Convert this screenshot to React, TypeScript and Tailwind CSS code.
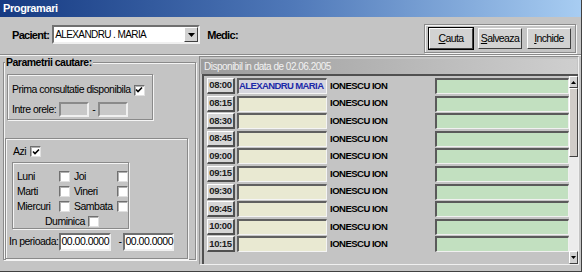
import React from "react";

const times = ["08:00", "08:15", "08:30", "08:45", "09:00", "09:15", "09:30", "09:45", "10:00", "10:15"];

const raised = "border-t-white border-l-white border-b-[#404040] border-r-[#404040] border";
const etched = "border border-[#8a8a8a] shadow-[1px_1px_0_#f4f4f4,inset_1px_1px_0_#f4f4f4]";
const field = "border-2 border-t-[#707070] border-l-[#707070] border-b-[#f0f0f0] border-r-[#f0f0f0]";

function Check({ checked = false }: { checked?: boolean }) {
  return (
    <span className="inline-flex w-[11px] h-[11px] bg-white items-center justify-center border border-t-[#707070] border-l-[#707070] border-b-[#e0e0e0] border-r-[#e0e0e0] shadow-[inset_1px_1px_0_#b0b0b0]">
      {checked && (
        <svg width="8" height="8" viewBox="0 0 8 8">
          <path d="M1 3.5 L3 5.5 L7 1.5" stroke="black" strokeWidth="1.6" fill="none" />
        </svg>
      )}
    </span>
  );
}

function Btn({ label, bold = false }: { label: string; bold?: boolean }) {
  return (
    <div className={`h-[21px] w-[44px] flex items-center justify-center bg-[#d2d2d2] ${bold ? "outline outline-1 outline-black" : ""} ${raised}`}>
      <span className="text-[10.5px] tracking-[-0.6px]">
        <span className="underline">{label[0]}</span>
        {label.slice(1)}
      </span>
    </div>
  );
}

function Row({ time, idx }: { time: string; idx: number }) {
  return (
    <div className="h-[17.6px] flex items-start pt-[1px]">
      <div className="ml-[3px] w-[28px] h-[16px] flex items-center justify-center bg-[#d6d6d6] text-[9.5px] tracking-[-0.4px] font-bold text-[#202020] border border-t-white border-l-white border-b-2 border-r-2 border-b-[#505050] border-r-[#505050]">
        {time}
      </div>
      <div
        className={`ml-[2px] w-[90px] h-[16px] flex items-center whitespace-nowrap overflow-hidden border-t-2 border-l-2 border-t-[#606060] border-l-[#606060] border-b border-r border-b-[#f4f4f4] border-r-[#f4f4f4] ${
          idx === 0 ? "bg-[#d6d6de] text-[#1c2aa8] font-bold text-[9.5px] tracking-[-0.6px]" : "bg-[#e9e9d2]"
        }`}
      >
        {idx === 0 ? "ALEXANDRU MARIA" : ""}
      </div>
      <div className="ml-[3px] w-[105px] h-[16px] flex items-center whitespace-nowrap text-[9.5px] tracking-[-0.5px] font-bold text-black">
        IONESCU ION
      </div>
      <div className="w-[134px] h-[16px] bg-[#c2e0c0] border-t-2 border-l-2 border-t-[#5a5a5a] border-l-[#5a5a5a] border-b border-r border-b-[#f0f0f0] border-r-[#f0f0f0]" />
    </div>
  );
}

export default function App() {
  return (
    <div className="w-[582px] h-[272px] bg-[#c4c4c4] flex flex-col overflow-hidden text-[10.5px] tracking-[-0.5px] text-black font-['Liberation_Sans',Arial,sans-serif] border-r border-b border-[#404040]">
      {/* title bar */}
      <div className="h-[17px] flex items-center pl-[3px] bg-gradient-to-r from-[#163a82] via-[#4f78b8] to-[#a8cdf2] text-white font-bold text-[11px] tracking-[-0.4px]">
        Programari
      </div>

      {/* top row */}
      <div className="h-[38px] flex items-start border-b border-b-[#8a8a8a] shadow-[0_1px_0_#f4f4f4]">
        <span className="mt-[10px] ml-[12px] font-bold text-[11px] tracking-[-0.7px]">Pacient:</span>
        <div className={`mt-[8px] ml-[3px] w-[148px] h-[19px] bg-white flex items-center ${field}`}>
          <span className="flex-1 pl-[1px] text-[10px] tracking-[-0.6px] whitespace-nowrap">ALEXANDRU . MARIA</span>
          <div className={`w-[14px] h-[15px] bg-[#d2d2d2] flex items-center justify-center ${raised}`}>
            <svg width="7" height="4" viewBox="0 0 7 4">
              <path d="M0 0 H7 L3.5 4 Z" fill="black" />
            </svg>
          </div>
        </div>
        <span className="mt-[10px] ml-[7px] font-bold text-[11px] tracking-[-0.7px]">Medic:</span>
        <div className={`ml-auto mr-[5px] mt-[7px] flex gap-[5px] px-[4px] py-[3px] ${etched}`}>
          <Btn label="Cauta" bold />
          <Btn label="Salveaza" />
          <Btn label="Inchide" />
        </div>
      </div>

      {/* main */}
      <div className="flex flex-1">
        {/* left */}
        <div className="w-[199px] pl-[3px] pt-[1px]">
          <fieldset className={`w-[193px] h-[204px] ${etched}`}>
            <legend className="ml-[1px] px-[1px] font-bold text-[10.5px] tracking-[-0.5px] leading-[12px] bg-[#c4c4c4]">
              Parametrii cautare:
            </legend>
            <div className={`ml-[3px] mt-[6px] w-[146px] h-[46px] pl-[4px] pt-[8px] ${etched}`}>
              <div className="flex items-center gap-[3px] h-[14px] whitespace-nowrap">
                <span>Prima consultatie disponibila</span>
                <Check checked />
              </div>
              <div className="flex items-center mt-[5px] h-[15px] whitespace-nowrap">
                <span>Intre orele:</span>
                <div className="ml-[3px] w-[30px] h-[15px] bg-[#c8c8c8] border-2 border-t-[#8a8a8a] border-l-[#8a8a8a] border-b-[#f0f0f0] border-r-[#f0f0f0]" />
                <span className="mx-[3px]">-</span>
                <div className="w-[30px] h-[15px] bg-[#c8c8c8] border-2 border-t-[#8a8a8a] border-l-[#8a8a8a] border-b-[#f0f0f0] border-r-[#f0f0f0]" />
              </div>
            </div>
            <div className={`mt-[18px] ml-[1px] w-[183px] h-[121px] pt-[6px] ${etched}`}>
              <div className="flex items-center gap-[4px] pl-[7px] h-[13px]">
                <span>Azi</span>
                <Check checked />
              </div>
              <div className={`ml-[6px] mt-[4px] w-[117px] h-[67px] pl-[4px] pt-[7px] ${etched}`}>
                <div className="grid grid-cols-[42px_15px_43px_12px] gap-y-[3px] items-center">
                  <span className="leading-[12px]">Luni</span>
                  <Check />
                  <span className="leading-[12px]">Joi</span>
                  <Check />
                  <span className="leading-[12px]">Marti</span>
                  <Check />
                  <span className="leading-[12px]">Vineri</span>
                  <Check />
                  <span className="leading-[12px]">Miercuri</span>
                  <Check />
                  <span className="leading-[12px]">Sambata</span>
                  <Check />
                </div>
                <div className="flex items-center gap-[3px] pl-[28px] mt-[3px]">
                  <span className="leading-[12px]">Duminica</span>
                  <Check />
                </div>
              </div>
              <div className="flex items-center mt-[4px] pl-[3px] h-[18px] whitespace-nowrap">
                <span>In perioada:</span>
                <div className={`ml-[1px] w-[52px] h-[18px] bg-white flex items-center ${field}`}>00.00.0000</div>
                <span className="ml-[7px] mr-[2px]">-</span>
                <div className={`w-[51px] h-[18px] bg-white flex items-center ${field}`}>00.00.0000</div>
              </div>
            </div>
          </fieldset>
        </div>

        {/* right */}
        <div className="w-[380px] mt-[1px] mb-[6px] flex flex-col border border-t-[#8a8a8a] border-l-[#8a8a8a] border-b-[#f0f0f0] border-r-[#f0f0f0]">
          <div className="h-[15px] mt-[2px] mx-[1px] flex items-center pl-[3px] bg-gradient-to-r from-[#9c9c9c] to-[#cfcfcf] text-[#f2f2f2] text-[10px] tracking-[-0.5px]">
            Disponibil in data de 02.06.2005
          </div>
          <div className="flex flex-1 ml-[2px] border-t-2 border-l-2 border-t-[#505050] border-l-[#505050]">
            <div className="flex-1 flex flex-col pt-[1px]">
              {times.map((t, i) => (
                <Row key={t} time={t} idx={i} />
              ))}
            </div>
            <div className="w-[11px] flex flex-col bg-[#ececec]">
              <div className={`h-[12px] bg-[#d2d2d2] flex items-center justify-center ${raised}`}>
                <svg width="5" height="3" viewBox="0 0 5 3">
                  <path d="M0 3 H5 L2.5 0 Z" fill="black" />
                </svg>
              </div>
              <div className={`h-[69px] bg-[#d0ccc8] ${raised}`} />
              <div className="flex-1" />
              <div className={`h-[13px] bg-[#d2d2d2] flex items-center justify-center ${raised}`}>
                <svg width="5" height="3" viewBox="0 0 5 3">
                  <path d="M0 0 H5 L2.5 3 Z" fill="black" />
                </svg>
              </div>
            </div>
          </div>
        </div>
      </div>
    </div>
  );
}
